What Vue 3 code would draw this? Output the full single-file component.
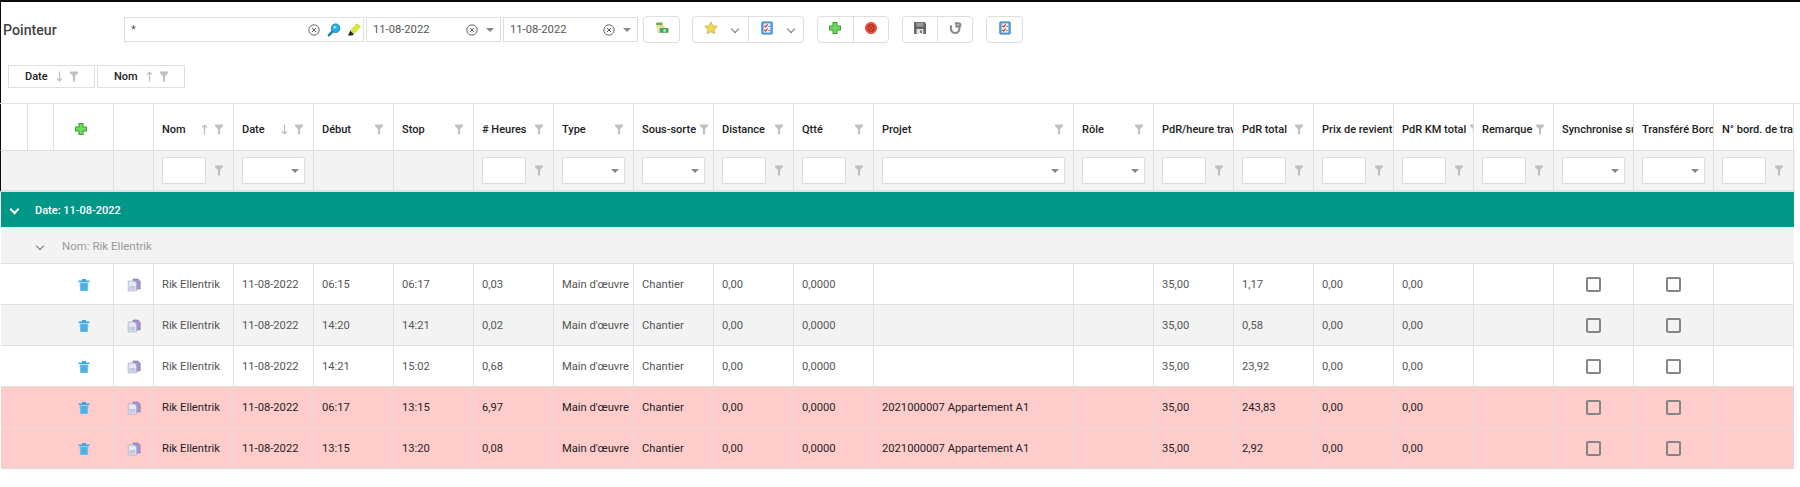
<script setup>
const columns = [
  { label: 'Nom', sort: 'up', filter: 'input' },
  { label: 'Date', sort: 'down', filter: 'select' },
  { label: 'Début', filter: 'none' },
  { label: 'Stop', filter: 'none' },
  { label: '# Heures', filter: 'input' },
  { label: 'Type', filter: 'select' },
  { label: 'Sous-sorte', filter: 'select' },
  { label: 'Distance', filter: 'input' },
  { label: 'Qtté', filter: 'input' },
  { label: 'Projet', filter: 'select' },
  { label: 'Rôle', filter: 'select' },
  { label: 'PdR/heure travail', filter: 'input' },
  { label: 'PdR total', filter: 'input' },
  { label: 'Prix de revient', filter: 'input' },
  { label: 'PdR KM total', filter: 'input' },
  { label: 'Remarque', filter: 'input' },
  { label: 'Synchronise sur', filter: 'select' },
  { label: 'Transféré Bordereau', filter: 'select' },
  { label: 'N° bord. de travail', filter: 'input' },
];

const rows = [
  { start: '06:15', stop: '06:17', hours: '0,03', project: '', total: '1,17', kind: 'white' },
  { start: '14:20', stop: '14:21', hours: '0,02', project: '', total: '0,58', kind: 'grey' },
  { start: '14:21', stop: '15:02', hours: '0,68', project: '', total: '23,92', kind: 'white' },
  { start: '06:17', stop: '13:15', hours: '6,97', project: '2021000007 Appartement A1', total: '243,83', kind: 'red' },
  { start: '13:15', stop: '13:20', hours: '0,08', project: '2021000007 Appartement A1', total: '2,92', kind: 'red' },
];

const cells = (r) => [
  'Rik Ellentrik', '11-08-2022', r.start, r.stop, r.hours, "Main d'œuvre", 'Chantier',
  '0,00', '0,0000', r.project, '', '35,00', r.total, '0,00', '0,00', '',
];
</script>

<template>
  <div class="page">
    <svg class="sprite" xmlns="http://www.w3.org/2000/svg">
      <symbol id="i-funnel" viewBox="0 0 8 11">
        <path d="M0 .5h8v1.4L5.1 5v5.5H2.9V5L0 1.9z" fill="#c0c0c0" />
      </symbol>
      <symbol id="i-up" viewBox="0 0 7 11">
        <path d="M3.5 10.5V1M1 3.6L3.5 1 6 3.6" fill="none" stroke="#bdbdbd" stroke-width="1.2" />
      </symbol>
      <symbol id="i-down" viewBox="0 0 7 11">
        <path d="M3.5 .5V10M1 7.4L3.5 10 6 7.4" fill="none" stroke="#bdbdbd" stroke-width="1.2" />
      </symbol>
      <symbol id="i-clear" viewBox="0 0 14 14">
        <circle cx="7" cy="7" r="5.2" fill="none" stroke="#6a6a6a" stroke-width="1" />
        <path d="M5 5l4 4M9 5l-4 4" stroke="#555" stroke-width="1" />
      </symbol>
      <symbol id="i-search" viewBox="0 0 14 14">
        <path d="M5.6 8.4L2 12.2" stroke="#1c7fb0" stroke-width="2.6" stroke-linecap="round" />
        <circle cx="8.6" cy="5.2" r="4.3" fill="#27b2e6" stroke="#1a86bd" stroke-width="1" />
        <circle cx="7.8" cy="4.2" r="1.4" fill="#8fdcf6" />
      </symbol>
      <symbol id="i-marker" viewBox="0 0 14 14">
        <path d="M3.4 7.4L10 .6l3.6 3-6.4 7z" fill="#d6ea3c" stroke="#b6cb28" stroke-width=".5" />
        <path d="M3.2 7.8l3.6 3.2-1.4 1.4H1z" fill="#2a2a1a" />
      </symbol>
      <symbol id="i-folder" viewBox="0 0 14 14">
        <path d="M1.2 1.5h6.3v2.8H1.2z" fill="#62b34e" />
        <path d="M1.5 4.2h7.2l1.3 2.6H1.5z" fill="#e8d98a" />
        <path d="M2 6.5h4v5.5H2z" fill="#eadfa6" />
        <path d="M4.8 7h8.7v4.8H4.8z" fill="#43a65e" />
        <circle cx="9.6" cy="9.4" r="1.5" fill="#b0e3c0" />
      </symbol>
      <symbol id="i-star" viewBox="0 0 14 14">
        <path d="M7 .8l1.9 4 4.4.6-3.2 3 .8 4.4L7 10.7l-3.9 2.1.8-4.4-3.2-3 4.4-.6z" fill="#f8d648" stroke="#bba662" stroke-width=".7" />
      </symbol>
      <symbol id="i-check" viewBox="0 0 14 14">
        <rect x="1.6" y=".8" width="10.8" height="12.4" rx="1" fill="#4a9fe2" stroke="#357fbf" stroke-width=".6" />
        <rect x="3.6" y="2.4" width="6.8" height="9.2" fill="#f1f1f4" />
        <path d="M4.4 4.6l1.3 1.3 2-2.6M4.4 8.8l1.3 1.3 2-2.6" fill="none" stroke="#d92f2f" stroke-width="1.2" />
        <path d="M8.2 5.4h1.8M8.2 9.6h1.8" stroke="#777" stroke-width=".9" />
      </symbol>
      <symbol id="i-plus" viewBox="0 0 14 14">
        <path d="M5 1.5h4V5h3.5v4H9v3.5H5V9H1.5V5H5z" fill="#72d868" stroke="#37a52f" stroke-width="1.1" stroke-linejoin="round" />
      </symbol>
      <symbol id="i-stop" viewBox="0 0 14 14">
        <circle cx="7" cy="7" r="5.6" fill="#f0533f" stroke="#dc3a2c" stroke-width=".8" />
        <circle cx="7" cy="7" r="3.1" fill="none" stroke="#a92a24" stroke-width="1.1" />
        <path d="M4.9 4.9l4.2 4.2M9.1 4.9l-4.2 4.2" stroke="#a92a24" stroke-width=".9" />
      </symbol>
      <symbol id="i-save" viewBox="0 0 14 14">
        <path d="M1 1h10.5L13 2.5V13H1z" fill="#666" />
        <rect x="3.4" y="1.6" width="7" height="4" fill="#9a9a9a" />
        <rect x="3.6" y="8" width="6.8" height="5" fill="#e3e3e3" />
        <rect x="7" y="9.4" width="2" height="2.6" fill="#777" />
      </symbol>
      <symbol id="i-undo" viewBox="0 0 14 14">
        <path d="M8 2.4h2.8a1.5 1.5 0 0 1 0 3H8.6M3 5.2v2.6a4.2 4.2 0 0 0 8.4 0V5.6" fill="none" stroke="#8a8a8a" stroke-width="2.2" stroke-linecap="round" />
        <path d="M8.2 1v5.6" stroke="#8a8a8a" stroke-width="1.4" />
      </symbol>
      <symbol id="i-trash" viewBox="0 0 14 14">
        <path d="M1.5 2.6h11v1.5h-11zM5 1h4v1.6H5z" fill="#3ba6df" />
        <path d="M2.6 4.4h8.8L10.8 13H3.2z" fill="#62c0ee" />
        <path d="M5.2 5.4v6.8M7 5.4v6.8M8.8 5.4v6.8" stroke="#3a9bd2" stroke-width=".8" />
      </symbol>
      <symbol id="i-copy" viewBox="0 0 14 14">
        <path d="M6 1h5l2.2 2.4V11H6z" fill="#a596cc" stroke="#7f70ab" stroke-width=".6" />
        <path d="M1.2 3h6.4l2 2V13H1.2z" fill="#e6e9f3" stroke="#9aa0b8" stroke-width=".6" />
        <rect x="2.4" y="8" width="6" height="3.6" fill="#c0cae3" />
      </symbol>
    </svg>

    <header class="toolbar">
      <h1 class="title">Pointeur</h1>
      <div class="field search">
        <span class="value">*</span>
        <svg class="icon"><use href="#i-clear" /></svg>
        <svg class="icon"><use href="#i-search" /></svg>
        <svg class="icon"><use href="#i-marker" /></svg>
      </div>
      <div v-for="n in 2" :key="n" class="field date">
        <span class="value">11-08-2022</span>
        <svg class="icon"><use href="#i-clear" /></svg>
        <span class="caret"></span>
      </div>
      <div class="btn-group solo"><button class="tool"><svg class="icon"><use href="#i-folder" /></svg></button></div>
      <div class="btn-group g-menu">
        <button class="tool wide"><svg class="icon"><use href="#i-star" /></svg><span class="chev"></span></button>
        <button class="tool wide"><svg class="icon"><use href="#i-check" /></svg><span class="chev"></span></button>
      </div>
      <div class="btn-group g-edit">
        <button class="tool"><svg class="icon"><use href="#i-plus" /></svg></button>
        <button class="tool"><svg class="icon"><use href="#i-stop" /></svg></button>
      </div>
      <div class="btn-group g-save">
        <button class="tool"><svg class="icon"><use href="#i-save" /></svg></button>
        <button class="tool"><svg class="icon"><use href="#i-undo" /></svg></button>
      </div>
      <div class="btn-group g-last"><button class="tool"><svg class="icon"><use href="#i-check" /></svg></button></div>
    </header>

    <div class="sort-chips">
      <div class="chip chip-date">
        <b>Date</b><svg class="arrow"><use href="#i-down" /></svg><svg class="funnel"><use href="#i-funnel" /></svg>
      </div>
      <div class="chip chip-nom">
        <b>Nom</b><svg class="arrow"><use href="#i-up" /></svg><svg class="funnel"><use href="#i-funnel" /></svg>
      </div>
    </div>

    <section class="table">
      <div class="grid head">
        <div class="cell"></div>
        <div class="cell"></div>
        <div class="cell center head-plus"><svg class="icon"><use href="#i-plus" /></svg></div>
        <div class="cell"></div>
        <div v-for="c in columns" :key="c.label" class="cell th">
          <span class="th-label">{{ c.label }}</span>
          <svg v-if="c.sort" class="arrow"><use :href="c.sort === 'up' ? '#i-up' : '#i-down'" /></svg>
          <svg class="funnel"><use href="#i-funnel" /></svg>
        </div>
      </div>

      <div class="grid filters">
        <div class="cell span-3"></div>
        <div class="cell"></div>
        <div v-for="c in columns" :key="c.label" class="cell f-cell">
          <template v-if="c.filter === 'input'">
            <span class="f-box f-input"></span>
            <svg class="funnel"><use href="#i-funnel" /></svg>
          </template>
          <span v-else-if="c.filter === 'select'" class="f-box f-select"><span class="caret"></span></span>
        </div>
      </div>

      <div class="group-row">
        <span class="group-chev"></span>
        <span>Date: 11-08-2022</span>
      </div>
      <div class="sub-row">
        <span class="group-chev"></span>
        <span>Nom: Rik Ellentrik</span>
      </div>

      <div v-for="(r, i) in rows" :key="i" class="grid row" :class="r.kind">
        <div class="cell span-3 actions">
          <svg class="icon"><use href="#i-trash" /></svg>
        </div>
        <div class="cell center"><svg class="icon"><use href="#i-copy" /></svg></div>
        <div v-for="(v, j) in cells(r)" :key="j" class="cell td">{{ v }}</div>
        <div class="cell center"><span class="checkbox"></span></div>
        <div class="cell center"><span class="checkbox"></span></div>
        <div class="cell"></div>
      </div>
    </section>
  </div>
</template>

<style scoped>
.page {
  height: 487px;
  box-sizing: border-box;
  border-top: 2px solid #0a0a0a;
  overflow: hidden;
  background: #fff;
  font-family: Roboto, "Liberation Sans", sans-serif;
  font-size: 11.2px;
  color: #222;
}

.sprite {
  display: block;
  width: 0;
  height: 0;
}

.icon {
  width: 14px;
  height: 14px;
  flex: none;
}

.funnel {
  width: 8px;
  height: 11px;
  flex: none;
}

.arrow {
  width: 7px;
  height: 11px;
  flex: none;
}

.toolbar {
  display: flex;
  align-items: flex-start;
  padding: 14px 0 0 1px;
  height: 27px;
  border-left: 1px solid #0a0a0a;
}

.title {
  width: 122px;
  margin: 0;
  padding-left: 1px;
  box-sizing: border-box;
  font-size: 14.2px;
  line-height: 28px;
  font-weight: 500;
  color: #444;
}

.field {
  display: flex;
  align-items: center;
  height: 25px;
  margin-top: 1px;
  box-sizing: border-box;
  border: 1px solid #dedede;
  font-size: 11.2px;
  color: #555;
}

.search {
  width: 240px;
  margin-right: 2px;
  padding: 0 2px 0 6px;
  gap: 6px;
}

.date {
  width: 135px;
  margin-right: 2px;
  padding: 0 5px 0 6px;
  gap: 5px;
}

.date + .date {
  margin-right: 5px;
}

.value {
  flex: 1;
}

.caret {
  display: inline-block;
  width: 0;
  height: 0;
  margin: 0 1px 0 2px;
  border-left: 4px solid transparent;
  border-right: 4px solid transparent;
  border-top: 4px solid #888;
}

.btn-group {
  display: flex;
  height: 27px;
  box-sizing: border-box;
  border: 1px solid #dedede;
  border-radius: 4px;
}

.solo { width: 37px; margin-right: 12px; }
.g-menu { width: 112px; margin-right: 13px; }
.g-edit { width: 72px; margin-right: 13px; }
.g-save { width: 71px; margin-right: 13px; }
.g-last { width: 37px; }

.tool {
  flex: 1;
  display: flex;
  align-items: center;
  justify-content: center;
  padding: 0 0 3px;
  border: 0;
  background: none;
}

.tool + .tool {
  border-left: 1px solid #dedede;
}

.tool.wide {
  justify-content: flex-start;
  padding-left: 11px;
  gap: 14px;
}

.chev,
.group-chev {
  display: inline-block;
  width: 5px;
  height: 5px;
  border-right: 1.5px solid #777;
  border-bottom: 1.5px solid #777;
  transform: rotate(45deg);
}

.chev {
  margin-top: 2px;
}

.sort-chips {
  display: flex;
  gap: 2px;
  padding: 22px 0 0 7px;
  height: 38px;
  border-left: 1px solid #0a0a0a;
}

.chip {
  display: flex;
  align-items: center;
  height: 23px;
  box-sizing: border-box;
  border: 1px solid #dedede;
  font-size: 11px;
  padding-left: 16px;
}

.chip b {
  font-weight: 500;
}

.chip-date { width: 87px; }
.chip-nom { width: 88px; }

.chip .arrow {
  margin: 0 7px 0 8px;
}

.table {
  border-top: 1px solid #e3e3e3;
}

.grid {
  display: grid;
  width: 1793px;
  margin-left: 1px;
  grid-template-columns: 27px 26px 60px 40px repeat(9, 80px) 200px repeat(9, 80px);
}

.cell {
  box-sizing: border-box;
  border-right: 1px solid #e0e0e0;
  min-width: 0;
}

.span-3 {
  grid-column: 1 / span 3;
}

.center {
  display: flex;
  align-items: center;
  justify-content: center;
}

.head,
.filters {
  margin-left: 0;
  width: 1794px;
  border-left: 1px solid #0a0a0a;
}

.head {
  height: 46px;
  border-bottom: 1px solid #e0e0e0;
}

.head-plus {
  padding: 4px 5px 0 0;
}

.th {
  display: flex;
  align-items: center;
  padding: 4px 10px 0 8px;
  font-weight: 500;
  font-size: 11px;
  color: #222;
  white-space: nowrap;
  overflow: hidden;
}

.th-label {
  flex: none;
  margin-right: auto;
}

.th .funnel {
  margin-left: 4px;
}

.th .arrow {
  margin: 0 3px 0 4px;
}

.filters {
  height: 39px;
  background: #f3f3f3;
  border-bottom: 2px solid #e0e0e0;
}

.f-cell {
  display: flex;
  align-items: center;
  padding: 0 8px;
  gap: 9px;
}

.f-box {
  display: flex;
  align-items: center;
  justify-content: flex-end;
  height: 27px;
  box-sizing: border-box;
  background: #fff;
  border: 1px solid #dcdcdc;
  border-radius: 2px;
  padding-right: 4px;
}

.f-input {
  width: 44px;
}

.f-select {
  flex: 1;
}

.group-row,
.sub-row {
  display: flex;
  align-items: center;
  width: 1793px;
  margin-left: 1px;
  box-sizing: border-box;
}

.group-row {
  height: 35px;
  background: #009688;
  color: #fff;
  font-weight: 500;
  font-size: 11px;
  padding: 1px 0 0 10px;
  gap: 17px;
}

.group-row .group-chev {
  border-color: #fff;
  border-width: 2px;
  margin-top: -1px;
}

.sub-row {
  height: 37px;
  background: #f3f3f3;
  color: #999;
  font-size: 11.5px;
  padding: 2px 0 0 36px;
  gap: 19px;
  border-bottom: 1px solid #e0e0e0;
}

.sub-row .group-chev {
  margin-top: -1px;
}

.row {
  height: 41px;
  box-sizing: border-box;
  border-bottom: 1px solid #e0e0e0;
  color: #555;
}

.row.grey { background: #f3f3f3; }

.row.red {
  background: #ffcccc;
  color: #222;
  border-bottom-color: #e6d6d6;
}

.row.red .cell {
  border-right-color: #e6d6d6;
}

.actions {
  display: flex;
  align-items: center;
  justify-content: flex-end;
  padding: 1px 22px 0 0;
}

.row .center {
  padding-top: 1px;
}

.td {
  display: flex;
  align-items: center;
  padding-left: 8px;
  white-space: nowrap;
  overflow: hidden;
}

.row .center .checkbox {
  width: 15px;
  height: 15px;
  box-sizing: border-box;
  border: 2px solid #858585;
  border-radius: 2px;
  margin-top: -1px;
}
</style>

<style>
body {
  background: #fff;
}
</style>
